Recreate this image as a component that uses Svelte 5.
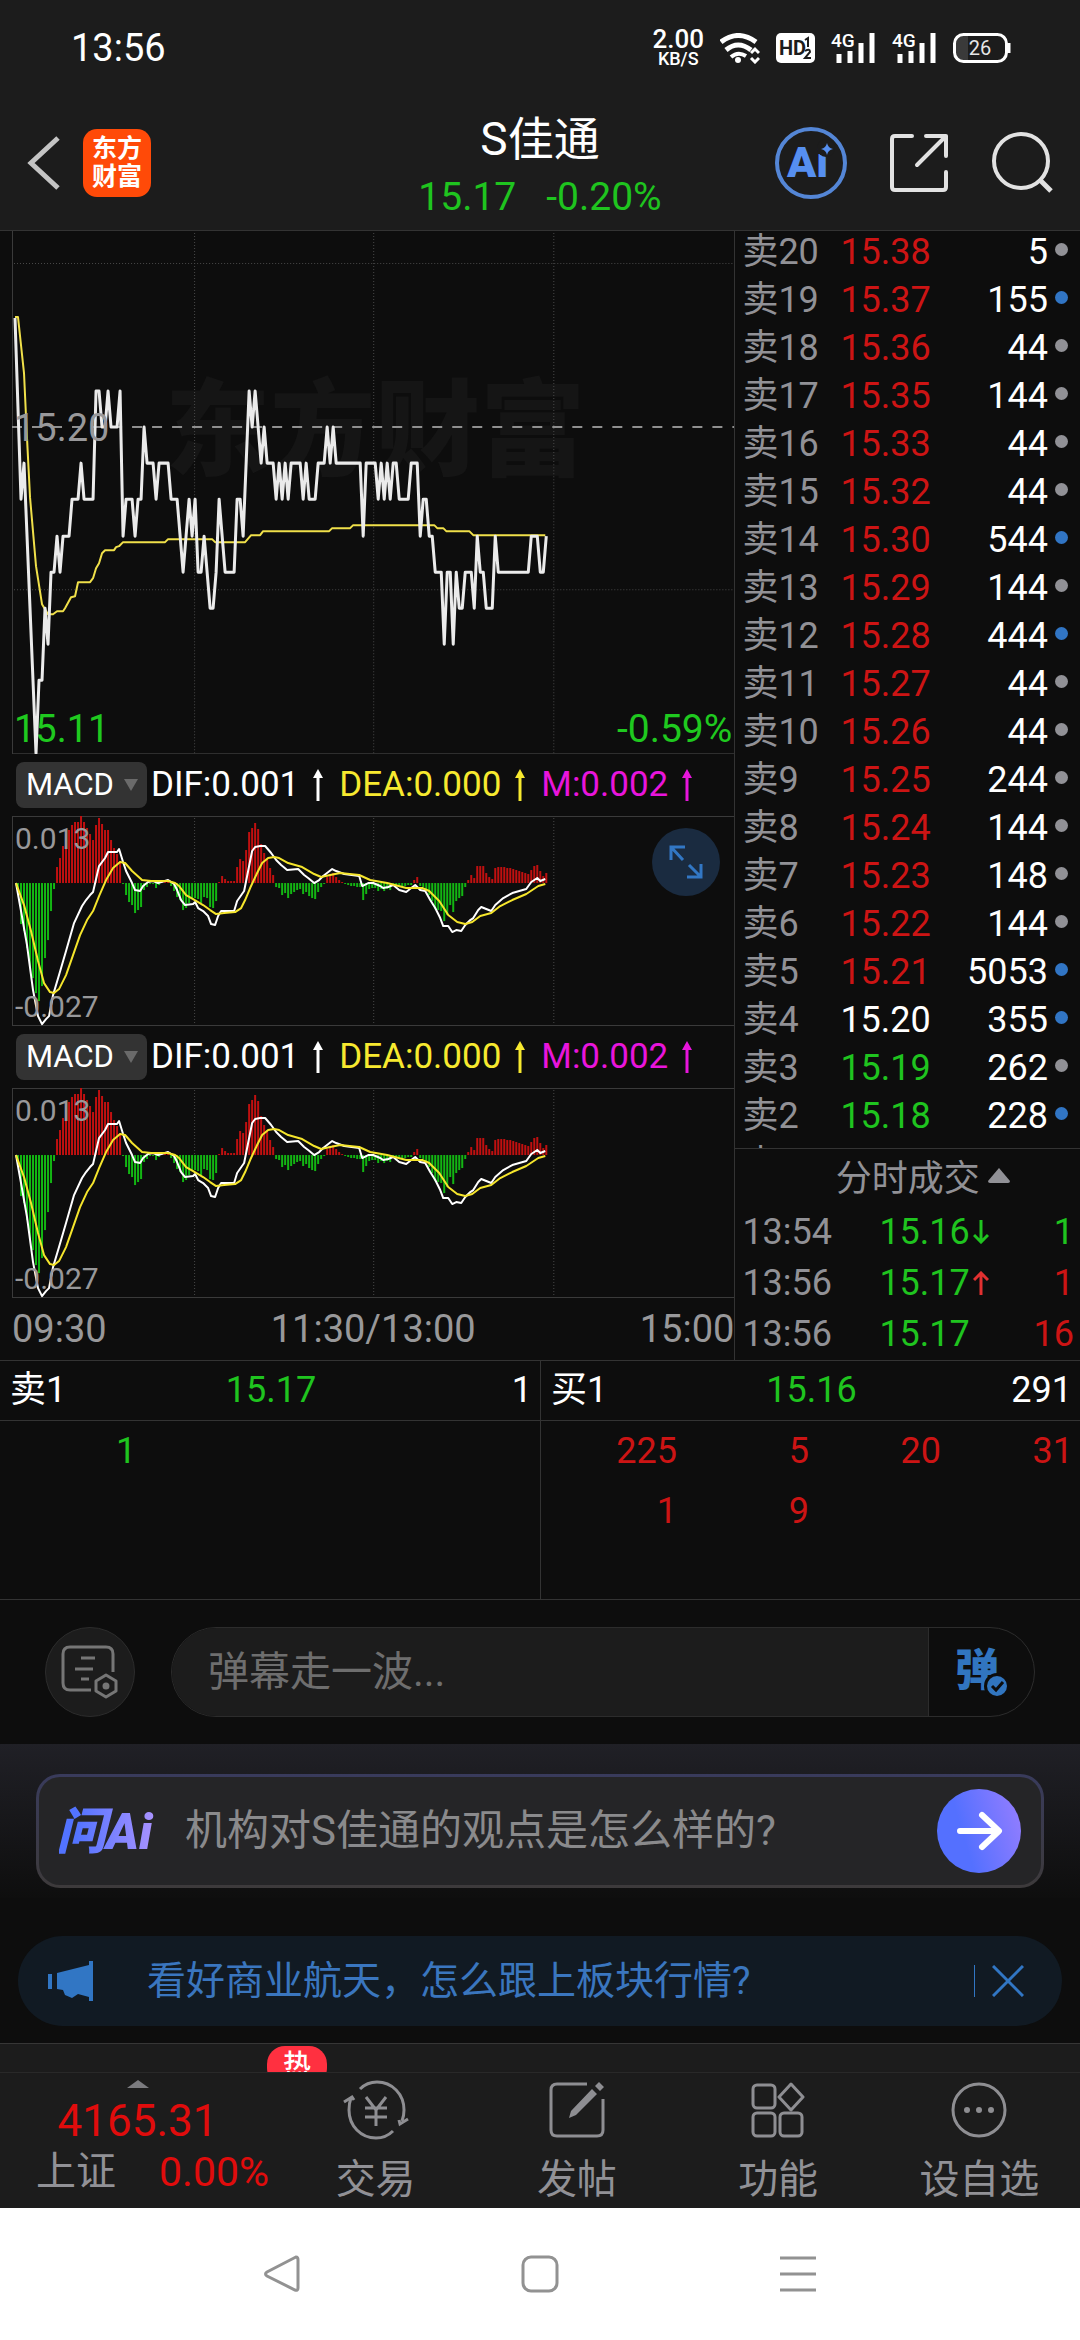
<script lang="ts">
  type Tone = "up" | "down" | "flat";

  interface BookRow {
    level: number;
    price: string;
    volume: number;
    big?: boolean;
  }

  const PREV_CLOSE = 15.2;

  const book: BookRow[] = [
    { level: 20, price: "15.38", volume: 5 },
    { level: 19, price: "15.37", volume: 155, big: true },
    { level: 18, price: "15.36", volume: 44 },
    { level: 17, price: "15.35", volume: 144 },
    { level: 16, price: "15.33", volume: 44 },
    { level: 15, price: "15.32", volume: 44 },
    { level: 14, price: "15.30", volume: 544, big: true },
    { level: 13, price: "15.29", volume: 144 },
    { level: 12, price: "15.28", volume: 444, big: true },
    { level: 11, price: "15.27", volume: 44 },
    { level: 10, price: "15.26", volume: 44 },
    { level: 9, price: "15.25", volume: 244 },
    { level: 8, price: "15.24", volume: 144 },
    { level: 7, price: "15.23", volume: 148 },
    { level: 6, price: "15.22", volume: 144 },
    { level: 5, price: "15.21", volume: 5053, big: true },
    { level: 4, price: "15.20", volume: 355, big: true },
    { level: 3, price: "15.19", volume: 262 },
    { level: 2, price: "15.18", volume: 228, big: true },
    { level: 1, price: "15.17", volume: 1 },
  ];

  const trades = [
    { time: "13:54", price: "15.16", move: "down", volume: 1, side: "down" },
    { time: "13:56", price: "15.17", move: "up", volume: 1, side: "up" },
    { time: "13:56", price: "15.17", move: "", volume: 16, side: "up" },
  ];

  const queues = [
    { label: "卖1", price: "15.17", total: 1, tone: "down", cells: [1] },
    { label: "买1", price: "15.16", total: 291, tone: "up", cells: [225, 5, 20, 31, 1, 9] },
  ];

  const indicators = [
    { label: "DIF:0.001", color: "#ffffff" },
    { label: "DEA:0.000", color: "#f7e92f" },
    { label: "M:0.002", color: "#e815dc" },
  ];

  // [minute, cents above 15.00], straight line between entries
  const ticks = [
    [0, 23], [2, 18], [3, 19], [7, 11], [8, 13], [9, 13], [10, 15], [11, 14], [12, 16], [13, 16],
    [14, 17], [15, 16], [16, 17], [18, 17], [19, 18], [21, 18], [22, 19], [23, 18], [26, 18], [27, 21],
    [28, 21], [29, 20], [30, 20], [31, 21], [32, 20], [34, 20], [35, 21], [36, 17], [37, 18], [39, 18],
    [40, 17], [41, 18], [42, 18], [43, 20], [44, 19], [46, 19], [47, 18], [48, 19], [51, 19], [52, 18],
    [54, 18], [56, 16], [58, 18], [59, 17], [60, 18], [61, 16], [62, 16], [63, 17], [65, 15], [66, 15],
    [67, 16], [68, 18], [70, 16], [73, 16], [74, 18], [75, 18], [76, 17], [78, 21], [79, 20], [80, 21],
    [82, 19], [83, 20], [84, 19], [86, 19], [87, 18], [88, 19], [89, 18], [90, 19], [91, 18], [92, 19],
    [95, 19], [96, 18], [97, 19], [98, 18], [100, 18], [101, 19], [103, 19], [104, 20], [105, 19],
    [106, 20], [107, 19], [115, 19], [116, 17], [117, 19], [120, 19], [121, 18], [122, 19], [123, 18],
    [124, 19], [125, 18], [126, 19], [127, 19], [128, 18], [131, 18], [132, 19], [134, 19], [135, 17],
    [136, 18], [137, 18], [138, 17], [139, 17], [140, 16], [142, 16], [143, 14], [144, 16], [145, 16],
    [146, 14], [147, 16], [148, 15], [149, 15], [150, 16], [152, 16], [153, 15], [154, 17], [155, 16],
    [156, 16], [157, 15], [159, 15], [160, 17], [161, 16], [171, 16], [172, 17], [174, 17], [175, 16],
    [176, 16], [177, 17],
  ];
  const priceLine = ticks.map(([m, c]) => `${3 + m * 3},${Math.round(196 - (c - 20) * 36.2)}`).join(" ");

  const avgLine =
    "3,86 6,86 12,142 15,207 18,266 24,335 30,373 36,383 41,383 45,380 51,380 53,377 59,366 63,365 66,351 78,351 81,347 84,337 87,332 90,322 93,319 102,319 104,316 107,315 111,311 153,311 156,308 200,308 203,311 233,311 239,304 248,304 251,300 317,300 320,297 338,297 341,294 422,294 425,297 431,297 434,300 457,300 461,304 533,304";

  const bars = [
    0, -10, -41, -48, -65, -84, -95, -110, -118, -103, -75, -57, -28, -6, 16, 25, 37, 49, 53, 58, 61, 61, 67,
    61, 55, 49, 43, 58, 65, 59, 53, 53, 43, 35, 29, 22, -1, -12, -19, -22, -30, -27, -24, -7, -4, -1, -1, -5,
    -2, 1, 1, 2, -3, -8, -14, -17, -27, -25, -20, -16, -15, -16, -20, -14, -15, -24, -25, -18, 1, 7, 4, 2, 2,
    2, 16, 24, 22, 33, 51, 55, 60, 54, 39, 30, 24, 15, 8, -4, -5, -12, -10, -15, -11, -9, -7, -6, -11, -9,
    -13, -15, -16, -9, -4, -1, 6, 9, 10, 6, 3, 1, -1, -2, -3, -3, -4, -4, -17, -11, -6, -5, -5, -8, -6, -8,
    -6, -7, -3, -4, -2, -3, -3, -2, -2, 3, 6, -3, -4, -7, -12, -18, -26, -27, -28, -38, -32, -22, -29, -18,
    -15, -13, -4, 3, 8, 5, 17, 17, 17, 10, 6, 4, 15, 16, 16, 16, 15, 15, 14, 13, 12, 11, 10, 9, 13, 17, 18,
    12, 7, 10,
  ];

  const difLine =
    "4,67 9,95 15,129 21,174 26,200 30,208 34,203 37,200 41,179 47,159 54,135 62,107 70,90 74,84 78,79 81,76 87,50 93,42 96,36 105,36 107,33 111,46 114,55 120,67 123,74 128,75 131,70 136,66 141,65 146,67 156,64 162,68 165,74 169,84 173,89 181,88 183,86 186,92 191,95 196,100 199,108 203,109 206,100 209,95 222,95 225,85 232,75 236,55 240,35 243,31 248,30 253,30 259,37 264,44 269,49 275,54 286,53 292,59 296,62 302,67 307,64 311,60 320,53 324,55 332,58 347,60 350,70 356,67 361,67 368,70 371,72 376,71 381,69 387,74 394,76 399,72 403,69 408,74 413,75 418,84 423,92 428,102 431,110 436,110 440,116 444,114 449,115 453,109 458,104 461,102 466,94 469,91 474,93 479,95 483,89 491,82 500,77 514,73 519,66 525,62 528,65 533,63";
  const deaLine =
    "4,67 12,89 19,115 26,145 32,167 38,176 42,177 47,173 54,159 61,139 68,119 75,104 81,95 87,80 94,64 101,52 108,46 113,47 120,55 130,64 139,65 156,65 163,67 167,70 174,79 181,83 191,89 198,94 204,98 212,97 223,96 229,92 233,84 238,72 245,57 250,47 256,42 262,41 267,42 276,47 290,51 302,58 309,61 318,59 328,57 347,59 358,64 375,67 394,72 410,72 417,75 427,85 436,99 445,106 453,108 460,106 468,100 479,97 488,90 500,84 514,78 526,70 533,68";

  const GRID_X = [182, 361, 541];

  function tone(price: string): Tone {
    const p = Number(price);
    if (p > PREV_CLOSE) return "up";
    return p < PREV_CLOSE ? "down" : "flat";
  }

  let message = $state("");
  let bannerOpen = $state(true);
</script>

{#snippet signal()}
  <svg class="signal" width="45" height="32" viewBox="0 0 45 32" aria-hidden="true">
    <text x="0" y="15" font-size="19" font-weight="500" fill="#fff">4G</text>
    <path d="M8 22v9M19 19v12M30 11v20M41 1v30" stroke="#fff" stroke-width="5" />
  </svg>
{/snippet}

{#snippet macd(id: string, expandable: boolean)}
  <div class="indicator-head">
    <span class="picker">
      <select id={id} aria-label="指标">
        <option>MACD</option>
        <option>KDJ</option>
      </select>
      <svg width="14" height="12" viewBox="0 0 14 12" aria-hidden="true"><path d="M0 0h14L7 12z" fill="#6a6a6a" /></svg>
    </span>
    {#each indicators as ind}
      <span class="indicator" style:color={ind.color}>
        {ind.label}
        <svg width="10" height="32" viewBox="0 0 10 32" aria-hidden="true">
          <path d="M5 5v27" stroke="currentColor" stroke-width="3" />
          <path d="M0 9L5 0l5 9z" fill="currentColor" />
        </svg>
      </span>
    {/each}
  </div>
  <div class="plot">
    <svg viewBox="0 0 722 210" role="img" aria-label="MACD">
      <path d="M722 0.5H0.5V209.5H722" fill="none" stroke="#3a3a3a" />
      {#each GRID_X as x}
        <path d="M{x}.5 2V209" stroke="#484848" stroke-dasharray="1 2" />
      {/each}
      {#each bars as h, i}
        <rect
          x={2 + i * 3}
          y={h > 0 ? 67 - h : 67}
          width="2"
          height={Math.abs(h)}
          fill={h > 0 ? "#c01010" : "#13b513"}
        />
      {/each}
      <polyline points={difLine} fill="none" stroke="#fff" stroke-width="2" stroke-linejoin="round" />
      <polyline points={deaLine} fill="none" stroke="#f5e52c" stroke-width="2" stroke-linejoin="round" />
      <text x="3" y="33" font-size="30" fill="#98989a">0.013</text>
      <text x="3" y="201" font-size="30" fill="#98989a">-0.027</text>
    </svg>
    {#if expandable}
      <button class="expand" aria-label="放大">
        <svg width="34" height="34" viewBox="0 0 34 34" fill="none" stroke="#3277c4" stroke-width="3">
          <path d="M2 15V2h14M2 2l12 13M32 19v13H18M32 32L20 20" />
        </svg>
      </button>
    {/if}
  </div>
{/snippet}

<div class="screen">
  <div class="status">
    <span class="clock">13:56</span>
    <div class="status-icons">
      <span class="speed"><b>2.00</b><small>KB/S</small></span>
      <svg width="40" height="31" viewBox="0 0 40 31" fill="none" stroke="#fff" aria-hidden="true">
        <path d="M1 9Q18 -4 36 9" stroke-width="5" />
        <path d="M6 17Q18 7 31 17" stroke-width="5" />
        <path d="M11 24Q18 18 26 23" stroke-width="4" />
        <circle cx="18" cy="27" r="3" fill="#fff" stroke="none" />
        <path d="M31 20l4-4 4 4M31 25l4 4 4-4" stroke-width="3" />
      </svg>
      <svg width="39" height="30" viewBox="0 0 39 30" aria-hidden="true">
        <rect width="39" height="30" rx="5" fill="#fff" />
        <text x="3" y="22" font-size="20" font-weight="700" fill="#1c1c1c">HD</text>
        <path d="M29 7l3-2v9M29 18q5-3 5 1l-5 6h6" fill="none" stroke="#1c1c1c" stroke-width="2" />
      </svg>
      {@render signal()}
      {@render signal()}
      <svg width="59" height="30" viewBox="0 0 59 30" aria-hidden="true">
        <path d="M8 3h7v24H8q-5 0-5-6V9q0-6 5-6z" fill="#3a3a3a" />
        <rect x="1.5" y="1.5" width="52" height="27" rx="9" fill="none" stroke="#fff" stroke-width="3" />
        <path d="M56 10v10" stroke="#fff" stroke-width="3" />
        <text x="27" y="22" font-size="20" text-anchor="middle" fill="#e6e6e6">26</text>
      </svg>
    </div>
  </div>

  <header>
    <div class="side">
      <button aria-label="返回">
        <svg width="34" height="54" viewBox="0 0 34 54" fill="none" stroke="#c4c4c4" stroke-width="5"><path d="M31 2L4 27l27 25" /></svg>
      </button>
      <a class="brand" href="#home"><span>东方</span><span>财富</span></a>
    </div>
    <div class="title">
      <h1>S佳通</h1>
      <p><span>15.17</span><span>-0.20%</span></p>
    </div>
    <div class="side end">
      <button aria-label="Ai">
        <svg width="72" height="72" viewBox="0 0 72 72">
          <circle cx="36" cy="36" r="34" fill="none" stroke="#5486d6" stroke-width="4" />
          <text x="12" y="50" font-size="43" font-weight="900" fill="#568ff0">Ai</text>
          <circle cx="51" cy="21" r="9" fill="#1c1c1c" />
          <path d="M52 16q1 5 6 6-5 1-6 6-1-5-6-6 5-1 6-6z" fill="#568ff0" />
        </svg>
      </button>
      <button aria-label="分享">
        <svg width="60" height="60" viewBox="0 0 60 60" fill="none" stroke="#e2e2e2" stroke-width="4" stroke-linecap="round" stroke-linejoin="round">
          <path d="M23 3H6q-3 0-3 3v48q0 3 3 3h48q3 0 3-3V39M37 3h20v20M57 3L28 32" />
        </svg>
      </button>
      <button aria-label="搜索">
        <svg width="62" height="62" viewBox="0 0 62 62" fill="none" stroke="#e2e2e2" stroke-width="4">
          <circle cx="30" cy="29" r="27" /><path d="M48 47l12 12" stroke-width="5" />
        </svg>
      </button>
    </div>
  </header>

  <main>
    <section class="charts">
      <svg class="price-chart" viewBox="0 0 722 523" role="img" aria-label="分时">
        <text x="153" y="236" font-size="105" font-weight="900" fill="#151515">东方财富</text>
        <path d="M0.5 0V522.5H722" fill="none" stroke="#3a3a3a" />
        {#each GRID_X as x}
          <path d="M{x}.5 2V522" stroke="#484848" stroke-dasharray="1 2" />
        {/each}
        <path d="M2 32.5H722M2 358.5H722" stroke="#484848" stroke-dasharray="1 2" />
        <path d="M0 196H722" stroke="#8f8f8f" stroke-width="2" stroke-dasharray="10 10" />
        <text x="2" y="511" font-size="38" fill="#1fc91f">15.11</text>
        <text x="720" y="511" font-size="39" text-anchor="end" fill="#1fc91f">-0.59%</text>
        <polyline points={avgLine} fill="none" stroke="#f0e04a" stroke-width="2" stroke-linejoin="round" />
        <polyline points={priceLine} fill="none" stroke="#ebebeb" stroke-width="3" stroke-linejoin="round" />
        <text x="2" y="210" font-size="38" fill="#98989a">15.20</text>
      </svg>
      {@render macd("indicator-1", true)}
      {@render macd("indicator-2", false)}
      <div class="axis"><span>09:30</span><span>11:30/13:00</span><span>15:00</span></div>
    </section>

    <aside>
      <div class="book">
        <table>
          <tbody>
            {#each book as row}
              <tr>
                <th scope="row">卖{row.level}</th>
                <td class={tone(row.price)}>{row.price}</td>
                <td class="volume">{row.volume}</td>
                <td class="mark"><i class:big={row.big}></i></td>
              </tr>
            {/each}
          </tbody>
        </table>
      </div>
      <div class="trades">
        <button class="trades-title">
          分时成交
          <svg width="22" height="15" viewBox="0 0 22 15" aria-hidden="true"><path d="M11 0L0 13q0 2 2 2h18q2 0 2-2z" fill="#919196" /></svg>
        </button>
        <table>
          <tbody>
            {#each trades as t}
              <tr>
                <th scope="row">{t.time}</th>
                <td class="down">
                  <span class="trade-price">
                    {t.price}
                    {#if t.move}
                      <svg class={t.move} width="16" height="24" viewBox="0 0 16 24" fill="none" stroke="currentColor" stroke-width="3" aria-hidden="true">
                        <path d={t.move === "up" ? "M8 24V2M1 9l7-7 7 7" : "M8 0v22M1 15l7 7 7-7"} />
                      </svg>
                    {/if}
                  </span>
                </td>
                <td class="volume {t.side}">{t.volume}</td>
              </tr>
            {/each}
          </tbody>
        </table>
      </div>
    </aside>
  </main>

  <section class="queues">
    {#each queues as q}
      <div class="queue">
        <div class="queue-head"><span>{q.label}</span><span class="down">{q.price}</span><span>{q.total}</span></div>
        <div class="queue-cells {q.tone}">
          {#each q.cells as c}<span>{c}</span>{/each}
        </div>
      </div>
    {/each}
  </section>

  <section class="chat">
    <button class="chat-settings" aria-label="弹幕设置">
      <svg width="58" height="54" viewBox="0 0 58 54" fill="none" stroke="#767676" stroke-width="3">
        <path d="M30 45H9q-7 0-7-7V9q0-7 7-7h36q7 0 7 7v18M20 13h14M14 24h18M20 34h8" />
        <path d="M45 30l10 6v10l-10 6-10-6V36z" stroke-linejoin="round" /><circle cx="45" cy="41" r="2" fill="#767676" />
      </svg>
    </button>
    <div class="chat-box">
      <input type="text" aria-label="弹幕" placeholder="弹幕走一波..." bind:value={message} />
      <button aria-label="弹幕开关">
        <svg width="54" height="52" viewBox="0 0 54 52">
          <text x="0" y="40" font-size="44" font-weight="900" fill="#3175bf">弹</text>
          <circle cx="42" cy="40" r="13" fill="#0d0d0d" />
          <circle cx="42" cy="40" r="10" fill="#3175bf" />
          <path d="M37 40l4 4 7-8" fill="none" stroke="#0d0d0d" stroke-width="3" />
        </svg>
      </button>
    </div>
  </section>

  <section class="ask">
    <button class="ask-box">
      <svg width="104" height="54" viewBox="0 0 104 54" role="img" aria-label="问Ai">
        <defs>
          <linearGradient id="ask-logo" x1="0" x2="1"><stop offset="0.2" stop-color="#5273ff" /><stop offset="1" stop-color="#a892ff" /></linearGradient>
          <linearGradient id="ask-go" x1="0" x2="1" y1="0.6" y2="0.3"><stop offset="0.3" stop-color="#5470ff" /><stop offset="1" stop-color="#917dff" /></linearGradient>
        </defs>
        <text x="-3" y="45" font-size="50" font-weight="900" font-style="italic" fill="url(#ask-logo)">问Ai</text>
      </svg>
      <span>机构对S佳通的观点是怎么样的?</span>
      <svg width="84" height="84" viewBox="0 0 84 84" aria-hidden="true">
        <circle cx="42" cy="42" r="42" fill="url(#ask-go)" />
        <path d="M23 42h38M45 26l17 16-17 16" fill="none" stroke="#fff" stroke-width="6" stroke-linecap="round" stroke-linejoin="round" />
      </svg>
    </button>
  </section>

  <section class="banner-wrap">
    {#if bannerOpen}
      <div class="banner">
        <svg width="46" height="40" viewBox="0 0 46 40" fill="#3176c4" aria-hidden="true">
          <path d="M0 13h4v15H0zM9 12L41 4V0h4v40h-4v-4l-11-3-6 4-7-3-2-5-6-1z" />
        </svg>
        <a href="#topic">看好商业航天，怎么跟上板块行情?</a>
        <button aria-label="关闭" onclick={() => (bannerOpen = false)}>
          <svg width="32" height="32" viewBox="0 0 32 32" stroke="#3176c4" stroke-width="3"><path d="M1 1l30 30M31 1L1 31" /></svg>
        </button>
      </div>
    {/if}
  </section>

  <div class="peek"><span>热</span></div>

  <nav class="tabs">
    <a class="index" href="#index">
      <svg width="22" height="8" viewBox="0 0 22 8" aria-hidden="true"><path d="M11 0l11 8H0z" fill="#7b7b7f" /></svg>
      <strong>4165.31</strong>
      <span class="index-row"><span>上证</span><em>0.00%</em></span>
    </a>
    <a href="#trade">
      <svg width="66" height="60" viewBox="0 0 66 60" fill="none" stroke="#8e8e92" stroke-width="3">
        <path d="M17 9Q24 2 34 2C49 2 61 14 61 30q0 6-2 11M50 51Q43 58 33 58C18 58 6 46 6 30q0-7 2-12" />
        <path d="M1 22l8-5 2 3M65 39l-8 5-1-4" />
        <path d="M23 17l10 13 10-13M33 30v16M22 28h22M22 37h22" />
      </svg>
      <span>交易</span>
    </a>
    <a href="#post">
      <svg width="58" height="60" viewBox="0 0 58 60" fill="none" stroke="#8e8e92" stroke-width="3">
        <path d="M39 4H9q-6 0-6 6v40q0 6 6 6h40q6 0 6-6V19" />
        <path d="M21 38l2-7L44 9l5 5-21 21zM47 6l4-4 5 5-4 4z" fill="#8e8e92" stroke="none" />
      </svg>
      <span>发帖</span>
    </a>
    <a href="#tools">
      <svg width="54" height="60" viewBox="0 0 54 60" fill="none" stroke="#8e8e92" stroke-width="3">
        <rect x="2" y="5" width="22" height="23" rx="4" />
        <rect x="2" y="33" width="22" height="23" rx="4" />
        <rect x="29" y="33" width="22" height="23" rx="4" />
        <path d="M40 4l12 13-12 13-12-13z" stroke-linejoin="round" />
      </svg>
      <span>功能</span>
    </a>
    <a href="#watch">
      <svg width="58" height="60" viewBox="0 0 58 60">
        <circle cx="29" cy="30" r="26" fill="none" stroke="#8e8e92" stroke-width="3" />
        <circle cx="17" cy="30" r="3" fill="#8e8e92" /><circle cx="29" cy="30" r="3" fill="#8e8e92" /><circle cx="41" cy="30" r="3" fill="#8e8e92" />
      </svg>
      <span>设自选</span>
    </a>
  </nav>

  <div class="system-nav">
    <button aria-label="返回上一级">
      <svg width="38" height="38" viewBox="0 0 38 38"><path d="M33 2q2 0 2 3v28q0 3-3 2L4 21q-3-2 0-4L31 3z" /></svg>
    </button>
    <button aria-label="主屏幕">
      <svg width="38" height="38" viewBox="0 0 38 38"><rect x="2" y="2" width="34" height="34" rx="8" /></svg>
    </button>
    <button aria-label="最近任务">
      <svg width="38" height="38" viewBox="0 0 38 38"><path d="M1 3h36M1 19h36M1 35h36" /></svg>
    </button>
  </div>
</div>

<style>
  :global(body) {
    margin: 0;
    background: #0d0d0d;
  }
  .screen {
    min-height: 100vh;
    display: flex;
    flex-direction: column;
    background: #0d0d0d;
    color: #fff;
    font-family: Roboto, "Noto Sans CJK SC", sans-serif;
    font-size: 36px;
    line-height: 48px;
  }
  button, input, select {
    font: inherit;
    color: inherit;
    background: none;
    border: none;
    padding: 0;
    margin: 0;
  }
  a { color: inherit; text-decoration: none; }
  svg { display: block; flex: none; }
  table { width: 100%; border-collapse: collapse; }
  th, td { padding: 0; font-weight: 400; text-align: left; }
  .up { color: #cc1414; }
  .down { color: #1fc41f; }
  .flat { color: #fff; }

  .status {
    display: flex;
    justify-content: space-between;
    align-items: center;
    height: 96px;
    padding: 0 68px 0 71px;
    background: #1c1c1c;
  }
  .clock { font-size: 38px; }
  .status-icons { display: flex; align-items: center; gap: 16px; }
  .speed {
    display: flex;
    flex-direction: column;
    align-items: center;
    font-weight: 500;
  }
  .speed b { font-size: 26px; line-height: 22px; font-weight: 500; }
  .speed small { font-size: 18px; line-height: 18px; }

  header {
    display: grid;
    grid-template-columns: 1fr auto 1fr;
    align-items: center;
    height: 134px;
    padding: 0 27px;
    background: #1c1c1c;
    border-bottom: 1px solid #333;
  }
  .side { display: flex; align-items: center; gap: 22px; }
  .end { justify-content: flex-end; gap: 42px; }
  .brand {
    display: flex;
    flex-direction: column;
    justify-content: center;
    align-items: center;
    width: 68px;
    height: 68px;
    border-radius: 14px;
    background: #ff4a08;
    font-size: 25px;
    line-height: 28px;
    font-weight: 700;
  }
  .title { padding-top: 7px; text-align: center; }
  h1 { margin: 0; font-size: 46px; line-height: 60px; font-weight: 400; }
  .title p {
    display: flex;
    gap: 30px;
    margin: 0;
    font-size: 39px;
    line-height: 56px;
    color: #1fc41f;
  }

  main {
    display: grid;
    grid-template-columns: 68% 32%;
    border-bottom: 1px solid #333;
  }
  .charts { padding-left: 12px; }
  .price-chart, .plot svg { width: 100%; height: auto; }
  .plot { position: relative; }
  .indicator-head {
    display: flex;
    align-items: center;
    height: 62px;
    padding-left: 4px;
  }
  .picker {
    display: flex;
    align-items: center;
    width: 131px;
    height: 46px;
    margin-right: 4px;
    border-radius: 8px;
    background: #333;
  }
  .picker select {
    appearance: none;
    width: 108px;
    padding-left: 10px;
    font-size: 31px;
    line-height: 46px;
  }
  .indicator {
    display: flex;
    align-items: center;
    gap: 14px;
    margin-right: 16px;
    font-size: 35px;
  }
  .expand {
    position: absolute;
    right: 14px;
    top: 12px;
    display: grid;
    place-items: center;
    width: 68px;
    height: 68px;
    border-radius: 50%;
    background: #1a2b40;
  }
  .expand svg { width: 34px; }
  .axis {
    display: flex;
    justify-content: space-between;
    font-size: 38px;
    line-height: 61px;
    color: #98989a;
  }

  aside {
    display: flex;
    flex-direction: column;
    border-left: 1px solid #333;
  }
  aside th { color: #919196; }
  .book {
    flex: 1;
    contain: size;
    overflow: hidden;
  }
  .book table { margin-top: -3px; }
  .book tr { height: 48px; }
  .book th { width: 98px; padding-left: 7px; }
  .volume { text-align: right; }
  .mark { width: 32px; }
  .mark i {
    display: block;
    width: 13px;
    height: 13px;
    margin-left: 7px;
    margin-bottom: 6px;
    border-radius: 50%;
    background: #919196;
  }
  .mark i.big { background: #3175c4; }
  .trades { border-top: 1px solid #333; }
  .trades-title {
    display: flex;
    justify-content: center;
    align-items: center;
    gap: 8px;
    width: 100%;
    height: 58px;
    padding: 3px 0 0 30px;
    color: #919196;
  }
  .trades-title svg { margin-bottom: 8px; }
  .trades tr { height: 51px; }
  .trades th { width: 137px; padding-left: 7px; }
  .trades .volume { padding-right: 6px; }
  .trade-price { display: flex; align-items: center; gap: 3px; }
  .trade-price svg.up { color: #e23030; }

  .queues {
    display: grid;
    grid-template-columns: 1fr 1fr;
    border-bottom: 1px solid #333;
  }
  .queue + .queue { border-left: 1px solid #333; }
  .queue-head {
    display: grid;
    grid-template-columns: 1fr auto 1fr;
    padding: 0 8px 0 10px;
    line-height: 59px;
    border-bottom: 1px solid #333;
  }
  .queue-head span:last-child { text-align: right; }
  .queue-cells {
    display: grid;
    grid-template-columns: repeat(4, 1fr);
    grid-auto-rows: 60px;
    align-content: start;
    min-height: 178px;
    padding: 0 7px 0 4px;
    line-height: 60px;
    text-align: right;
  }

  .chat {
    display: flex;
    gap: 36px;
    padding: 27px 45px;
  }
  .chat-settings {
    display: grid;
    place-items: center;
    width: 90px;
    height: 90px;
    box-sizing: border-box;
    border: 1px solid #2c2c2c;
    border-radius: 50%;
    background: #1c1c1c;
  }
  .chat-box {
    display: flex;
    flex: 1;
    height: 88px;
    border: 1px solid #2c2c2c;
    border-radius: 45px;
    overflow: hidden;
  }
  .chat-box input {
    flex: 1;
    min-width: 0;
    padding-left: 36px;
    font-size: 41px;
    background: #1c1c1c;
    border-right: 1px solid #2c2c2c;
  }
  .chat-box input::placeholder { color: #6e6e6e; opacity: 1; }
  .chat-box button { width: 105px; display: grid; place-items: center; }

  .ask {
    padding: 30px 36px 10px;
    background: linear-gradient(#202026, #0e0e0e);
  }
  .ask-box {
    display: flex;
    align-items: center;
    width: 100%;
    height: 114px;
    padding: 0 20px;
    border: 3px solid transparent;
    border-radius: 24px;
    background:
      linear-gradient(#252527, #252527) padding-box,
      linear-gradient(#393b5c, #3d3a3b) border-box;
  }
  .ask-box span {
    flex: 1;
    padding-left: 22px;
    text-align: left;
    font-size: 42px;
    color: #8a8a8c;
    white-space: nowrap;
  }

  .banner-wrap { padding: 38px 18px 17px; }
  .banner {
    display: flex;
    align-items: center;
    height: 90px;
    padding: 0 38px 0 30px;
    border-radius: 45px;
    background: #111a23;
    color: #3a76bf;
  }
  .banner a { flex: 1; padding-left: 53px; font-size: 39px; }
  .banner button { padding-left: 17px; border-left: 1px solid #3176c4; }

  .peek {
    height: 28px;
    padding-left: 267px;
    overflow: hidden;
    background: #1c1c1c;
    border-top: 1px solid #363636;
    border-bottom: 1px solid #292929;
  }
  .peek span {
    display: block;
    width: 60px;
    margin-top: 2px;
    border-radius: 18px;
    background: #ff3040;
    font-size: 28px;
    line-height: 40px;
    font-weight: 500;
    text-align: center;
  }

  .tabs {
    display: grid;
    grid-template-columns: 275px repeat(4, 1fr);
    height: 135px;
    background: #1c1c1c;
    color: #919196;
    font-size: 40px;
  }
  .tabs a {
    display: flex;
    flex-direction: column;
    align-items: center;
    padding-top: 7px;
  }
  .tabs a > span { padding-top: 16px; }
  .tabs .index strong {
    padding-top: 6px;
    font-size: 44px;
    line-height: 54px;
    font-weight: 400;
    color: #e00c0c;
  }
  .tabs .index .index-row {
    display: flex;
    justify-content: space-between;
    align-self: stretch;
    padding: 0 6px 0 36px;
  }
  .tabs .index .index-row { padding-top: 0; }
  em { font-style: normal; font-size: 41px; color: #e00c0c; }

  .system-nav {
    display: flex;
    flex: 1;
    justify-content: center;
    align-items: center;
    gap: 220px;
    min-height: 128px;
    background: #fff;
  }
  .system-nav svg { fill: none; stroke: #929292; stroke-width: 3; }
</style>
